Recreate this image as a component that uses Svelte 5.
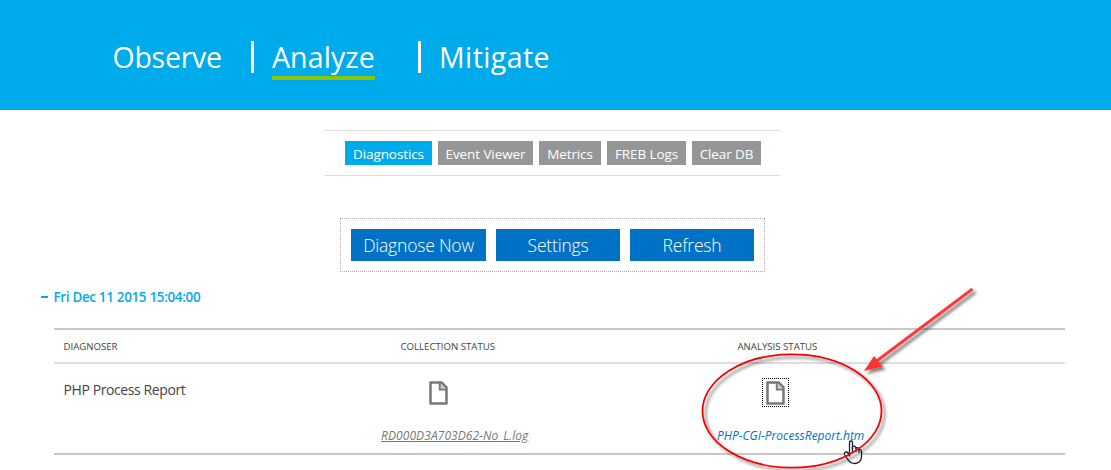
<script>
  const nav = [
    { label: 'Observe', width: 138, spacing: -0.25 },
    { label: 'Analyze', width: 146, spacing: 0.1, active: true },
    { label: 'Mitigate', width: 112, spacing: 0.4 }
  ];
  const tabs = [
    { label: 'Diagnostics', width: 87, active: true },
    { label: 'Event Viewer', width: 95 },
    { label: 'Metrics', width: 62 },
    { label: 'FREB Logs', width: 79 },
    { label: 'Clear DB', width: 69 }
  ];
  const actions = [
    { label: 'Diagnose Now', width: 135 },
    { label: 'Settings', width: 124 },
    { label: 'Refresh', width: 124 }
  ];
</script>

{#snippet doc()}
  <svg class="doc" width="19" height="24" viewBox="0 0 19 24">
    <path d="M1.5 1.5H12.5L17.5 6.5V22.5H1.5Z" fill="#fff" stroke="#777" stroke-width="2.5" stroke-linejoin="round" />
    <path d="M10.8 1.5V8.5H17.5" fill="none" stroke="#777" stroke-width="2" />
    <path d="M12 2.5L16.5 7H12Z" fill="#ccc" />
  </svg>
{/snippet}

<div class="page">
  <header>
    {#each nav as item}
      <div class="nav-item" style:width="{item.width}px">
        <span class:active={item.active} style:letter-spacing="{item.spacing}px">{item.label}</span>
      </div>
    {/each}
  </header>

  <nav class="tabs">
    {#each tabs as tab}
      <div class="tab" class:active={tab.active} style:width="{tab.width}px">{tab.label}</div>
    {/each}
  </nav>

  <div class="actions">
    {#each actions as action}
      <div class="action" style:width="{action.width}px">{action.label}</div>
    {/each}
  </div>

  <h2><i></i><span>Fri Dec 11 2015 15:04:00</span></h2>

  <div class="table">
    <div class="row head">
      <div><span>DIAGNOSER</span></div>
      <div><span>COLLECTION STATUS</span></div>
      <div><span>ANALYSIS STATUS</span></div>
    </div>
    <div class="row body">
      <div class="name"><span>PHP Process Report</span></div>
      <div class="file">
        <div class="icon">{@render doc()}</div>
        <span class="log">RD000D3A703D62-No_L.log</span>
      </div>
      <div class="file">
        <div class="icon focus">{@render doc()}</div>
        <span class="report">PHP-CGI-ProcessReport.htm</span>
      </div>
    </div>
  </div>

  <svg class="overlay" width="1111" height="470" viewBox="0 0 1111 470">
    <defs>
      <filter id="shadow" x="-20%" y="-20%" width="140%" height="140%">
        <feDropShadow dx="3" dy="3" stdDeviation="1.8" flood-color="#000" flood-opacity=".5" />
      </filter>
    </defs>
    <g fill="#fff" stroke="#1c1c2c" stroke-width="1.3" stroke-linejoin="round">
      <path d="M849.5 454V442.5Q849.5 441 851 441T852.5 442.5V449V446.5Q855.5 445.5 856 448Q858.5 447 859 449.5Q861.5 449 861.5 452V457Q861 463 855 463.5Q850 463.5 847.5 459L844.5 454.5Q844 452 846.5 452Q848 452 849.5 456Z" />
      <path d="M852.5 447V452M856 448V452M859 449V453" fill="none" />
    </g>
    <ellipse cx="792" cy="411" rx="89.5" ry="56.7" fill="none" stroke="#f80000" stroke-width="1.8" filter="url(#shadow)" />
    <g filter="url(#shadow)">
      <path d="M972.5 289L876 361.5" stroke="#ff3838" stroke-width="3" fill="none" />
      <path d="M864 371L874 356L882.5 366.5Z" fill="#ff3333" />
    </g>
  </svg>
</div>

<style>
  :global(body) { margin: 0; background: #fff; }
  .page { position: relative; width: 1111px; height: 470px; overflow: hidden; font-family: "Open Sans", "Noto Sans", sans-serif; color: #444; }
  .page :is(div, nav, header) { box-sizing: border-box; }
  span { white-space: nowrap; }
  header { height: 110px; background: #00abec; display: flex; padding: 41px 0 0 112px; color: #fff; font-size: 28.5px; line-height: 32px; }
  .page .nav-item { height: 32px; }
  .page .nav-item:not(:last-child) { box-sizing: content-box; border-right: 3px solid #fff; margin-right: 18px; }
  .page .nav-item:first-child { padding-left: 0.5px; padding-right: 0.5px; }
  .nav-item span { display: inline-block; height: 35px; }
  .nav-item .active { width: 103px; border-bottom: 4px solid #8cc600; }
  .tabs { width: 455px; height: 46px; margin: 20px 0 0 325px; padding: 10px 19px 0 20px; border: solid #ddd; border-width: 1px 0; display: flex; gap: 6px; }
  .tab { height: 24px; background: #969696; color: #fff; font-size: 13.5px; letter-spacing: -0.1px; line-height: 26px; text-align: center; white-space: nowrap; }
  .tab.active { background: #00abec; }
  .actions { width: 425px; height: 54px; margin: 42px 0 0 340px; padding: 10px; border: 1px dotted #aaa; display: flex; gap: 10px; }
  .action { height: 32px; background: #0072c6; color: #fff; font-size: 17.5px; letter-spacing: -0.2px; font-weight: 300; line-height: 32px; text-align: center; white-space: nowrap; }
  h2 { display: flex; align-items: center; gap: 5.5px; height: 20px; margin: 15px 0 0 41px; font-size: 13.5px; letter-spacing: -0.35px; line-height: 20px; font-weight: 600; color: #00abec; }
  h2 i { width: 7px; height: 2px; background: #00abec; }
  .table { width: 1011px; margin: 21px 0 0 54px; border: solid #c8c8c8; border-width: 2px 0; }
  .row { display: grid; grid-template-columns: 337px 337px 337px; }
  .row > div { padding-left: 9.5px; }
  .head { height: 34px; border-bottom: 2px solid #ddd; font-size: 9.65px; line-height: 33px; }
  .head > div { height: 32px; }
  .body { height: 89px; }
  .name { font-size: 14px; letter-spacing: -0.4px; line-height: 20px; padding-top: 16px; }
  .file { display: flex; flex-direction: column; align-items: flex-start; padding-top: 14px; }
  .row > .file { padding-left: 0; }
  .icon { width: 27px; height: 29px; margin-left: 34px; display: grid; place-items: center; }
  .focus { border: 1px dotted #000; }
  .doc { display: block; }
  .log, .report { font-size: 12px; font-style: italic; line-height: 18px; margin: 20px 0 0 -10px; }
  .log { color: #777; text-decoration: underline; letter-spacing: 0.08px; }
  .report { color: #0072c6; margin-left: -11px; }
  .overlay { position: absolute; left: 0; top: 0; }
</style>
